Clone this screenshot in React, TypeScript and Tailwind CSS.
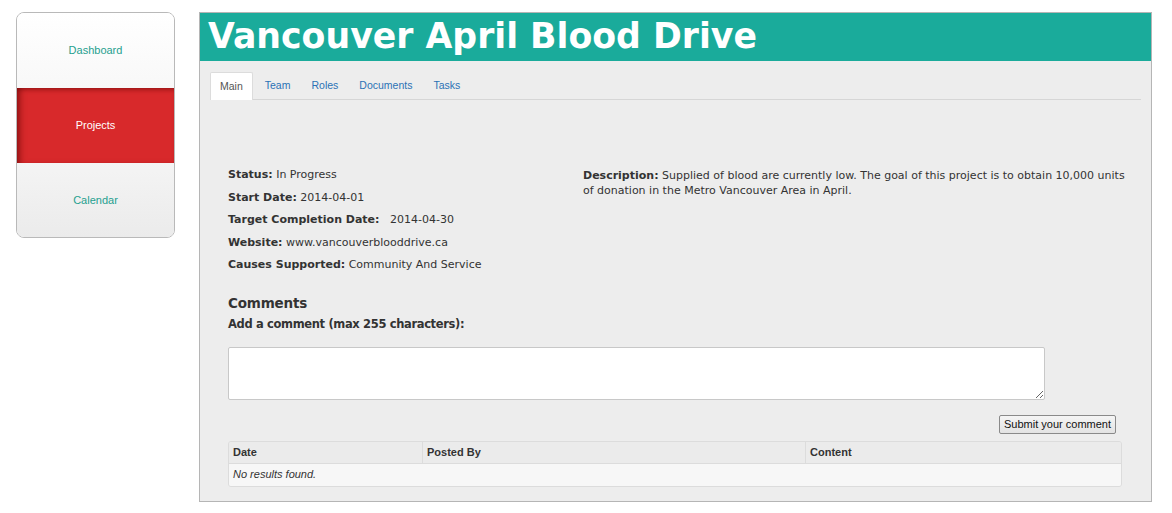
import React from 'react';

const navItems = [
  { label: 'Dashboard', active: false },
  { label: 'Projects', active: true },
  { label: 'Calendar', active: false },
];

const tabs = ['Main', 'Team', 'Roles', 'Documents', 'Tasks'];

function Sidebar() {
  return (
    <div className="w-[159px] h-[226px] shrink-0 rounded-[8px] border border-[#b9b9b9] overflow-hidden flex flex-col font-['Liberation_Sans',Arial,sans-serif] text-[11px]">
      {navItems.map((item) =>
        item.active ? (
          <div
            key={item.label}
            className="h-[75px] flex items-center justify-center bg-[#d8292b] text-white shadow-[inset_6px_0_6px_-3px_rgba(90,0,0,0.55),inset_0_4px_4px_-2px_rgba(90,0,0,0.4)]"
          >
            {item.label}
          </div>
        ) : (
          <div
            key={item.label}
            className={
              item.label === 'Dashboard'
                ? 'h-[75px] flex items-center justify-center bg-gradient-to-b from-white to-[#f8f8f8] text-[#26a08f]'
                : 'flex-1 flex items-center justify-center bg-gradient-to-b from-[#f4f4f4] to-[#ebebeb] text-[#26a08f]'
            }
          >
            {item.label}
          </div>
        )
      )}
    </div>
  );
}

function InfoRow({ label, value, gap }: { label: string; value: string; gap?: boolean }) {
  return (
    <div>
      <span className="font-bold">{label}</span>
      {gap ? '\u00a0\u00a0 ' : ' '}
      {value}
    </div>
  );
}

export default function App() {
  return (
    <div className="min-h-[513px] bg-white flex items-start gap-[24px] pt-[12px] pl-[16px]">
      <Sidebar />

      <div className="w-[953px] h-[490px] border border-[#b5b5b5] bg-[#ededed] flex flex-col">
        {/* Header */}
        <div className="h-[48px] bg-[#1aab9b] pl-[8px] flex items-center">
          <h1 className="text-white font-bold text-[34.7px] leading-none font-['DejaVu_Sans',Verdana,sans-serif] -mt-[2px]">
            Vancouver April Blood Drive
          </h1>
        </div>

        {/* Tabs */}
        <div className="mx-[10px] mt-[11px] flex items-end border-b border-[#d6d6d6] font-['Liberation_Sans',Arial,sans-serif] text-[10.5px]">
          {tabs.map((t) =>
            t === 'Main' ? (
              <div
                key={t}
                className="h-[28px] px-[9px] mr-[2px] -mb-px flex items-center bg-white border border-b-0 border-[#dcdcdc] text-[#555] rounded-t-[2px]"
              >
                {t}
              </div>
            ) : (
              <div key={t} className="h-[27px] px-[10px] mr-[1px] flex items-center text-[#2b72b5]">
                {t}
              </div>
            )
          )}
        </div>

        {/* Details */}
        <div className="pl-[28px] pr-[16px] font-['DejaVu_Sans',Verdana,sans-serif] text-[11px] text-[#333]">
          <div className="mt-[64px] flex">
            <div className="w-[355px] leading-[22.5px]">
              <InfoRow label="Status:" value="In Progress" />
              <InfoRow label="Start Date:" value="2014-04-01" />
              <InfoRow label="Target Completion Date:" value="2014-04-30" gap />
              <InfoRow label="Website:" value="www.vancouverblooddrive.ca" />
              <InfoRow label="Causes Supported:" value="Community And Service" />
            </div>
            <p className="flex-1 leading-[15px] pt-[4px]">
              <b>Description:</b> Supplied of blood are currently low. The goal of this project is to obtain 10,000
              units of donation in the Metro Vancouver Area in April.
            </p>
          </div>

          {/* Comments */}
          <div className="mt-[17px] text-[13.5px] font-bold leading-[18px] tracking-[-0.2px]">Comments</div>
          <div className="mt-[4px] text-[11.5px] font-bold leading-[16px] tracking-[-0.35px]">
            Add a comment (max 255 characters):
          </div>

          <textarea className="mt-[15px] block w-[817px] h-[53px] bg-white border border-[#c8c8c8] rounded-[2px] resize-y outline-none" />

          <div className="w-[888px] flex justify-end mt-[15px]">
            <button className="h-[19px] px-[4px] border border-[#8a8a8a] rounded-[2px] bg-gradient-to-b from-[#f5f5f5] to-[#e3e3e3] text-[11px] text-[#111] font-['Liberation_Sans',Arial,sans-serif] leading-none">
              Submit your comment
            </button>
          </div>

          {/* Table */}
          <div className="mt-[7px] w-[894px] border border-[#dcdcdc] rounded-[3px] overflow-hidden font-['Liberation_Sans',Arial,sans-serif] text-[11px]">
            <div className="flex h-[22px] bg-[#ebebeb] border-b border-[#dcdcdc] font-bold text-[#333]">
              <div className="w-[194px] px-[4px] flex items-center border-r border-[#dcdcdc]">Date</div>
              <div className="w-[383px] px-[4px] flex items-center border-r border-[#dcdcdc]">Posted By</div>
              <div className="flex-1 px-[4px] flex items-center">Content</div>
            </div>
            <div className="h-[22px] bg-[#f7f7f7] px-[4px] flex items-center italic text-[#333]">No results found.</div>
          </div>
        </div>
      </div>
    </div>
  );
}
